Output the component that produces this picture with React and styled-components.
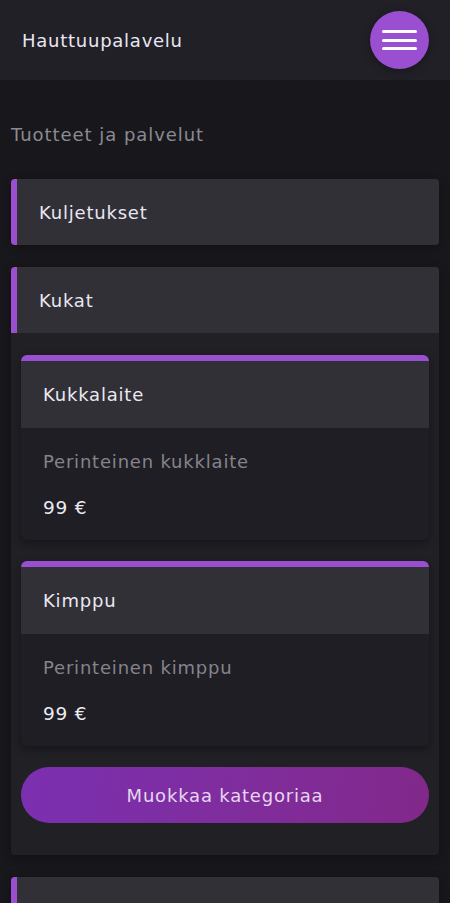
import React from "react";
import styled, { createGlobalStyle } from "styled-components";

const Global = createGlobalStyle`
  html, body { margin: 0; padding: 0; background: #18181c; }
  body { font-family: "DejaVu Sans", "Noto Sans", sans-serif; }
  * { box-sizing: border-box; }
`;

const Page = styled.div`
  min-height: 903px;
  background: #18181c;
`;

const Header = styled.header`
  height: 80px;
  background: #202026;
  display: flex;
  align-items: center;
  justify-content: space-between;
  padding: 0 21px 0 22px;
`;

const Brand = styled.div`
  color: #eae6f2;
  font-size: 18px;
  letter-spacing: 0.75px;
`;

const MenuButton = styled.button`
  width: 59px;
  height: 58px;
  border-radius: 50%;
  border: none;
  background: #9a4fd0;
  display: flex;
  flex-direction: column;
  align-items: center;
  justify-content: center;
  gap: 5.5px;
  box-shadow: 0 2px 8px rgba(0, 0, 0, 0.35);
  padding: 0;
`;

const Bar = styled.span`
  display: block;
  width: 35px;
  height: 3px;
  border-radius: 2px;
  background: #ffffff;
`;

const Main = styled.main`
  padding: 0 11px;
  display: flex;
  flex-direction: column;
  gap: 22px;
`;

const SectionTitle = styled.h2`
  margin: 0 0 -22px;
  padding-top: 43px;
  height: 99px;
  font-weight: 400;
  font-size: 18px;
  letter-spacing: 0.95px;
  color: #8b8a93;
  line-height: 24px;
`;

const Category = styled.section`
  border-radius: 4px;
  overflow: hidden;
  background: #202025;
  box-shadow: 0 2px 10px rgba(0, 0, 0, 0.3);
`;

const CategoryHeader = styled.div`
  height: 66px;
  background: #303036;
  border-left: 6px solid #9a4fd0;
  display: flex;
  align-items: center;
  padding-left: 22px;
  color: #e9e6f2;
  font-size: 18px;
  letter-spacing: 0.8px;
`;

const CategoryBody = styled.div`
  padding: 22px 10px 32px;
  display: flex;
  flex-direction: column;
  gap: 21px;
`;

const Product = styled.article`
  border-radius: 6px;
  overflow: hidden;
  border-top: 6px solid #9a4fd0;
  background: #1f1e24;
  box-shadow: 0 3px 10px rgba(0, 0, 0, 0.35);
`;

const ProductHeader = styled.div`
  height: 67px;
  background: #303036;
  display: flex;
  align-items: center;
  padding-left: 22px;
  color: #ebe8f2;
  font-size: 18px;
  letter-spacing: 0.8px;
`;

const ProductBody = styled.div`
  height: 112px;
  padding: 22px 22px 0;
  display: flex;
  flex-direction: column;
  gap: 22px;
`;

const Description = styled.div`
  color: #85838c;
  font-size: 18px;
  letter-spacing: 0.8px;
  line-height: 24px;
`;

const Price = styled.div`
  color: #eceaf2;
  font-size: 18.5px;
  letter-spacing: 0.8px;
  line-height: 24px;
`;

const EditButton = styled.button`
  height: 56px;
  border: none;
  border-radius: 28px;
  background: linear-gradient(100deg, #7b30b1 0%, #7f2d9e 50%, #82288a 100%);
  color: #e6d6f0;
  font-family: inherit;
  font-size: 18px;
  letter-spacing: 0.8px;
  cursor: pointer;
`;

const products = [
  { name: "Kukkalaite", desc: "Perinteinen kukklaite", price: "99 €" },
  { name: "Kimppu", desc: "Perinteinen kimppu", price: "99 €" },
];

export default function App() {
  return (
    <Page>
      <Global />
      <Header>
        <Brand>Hauttuupalavelu</Brand>
        <MenuButton aria-label="menu">
          <Bar />
          <Bar />
          <Bar />
        </MenuButton>
      </Header>
      <Main>
        <SectionTitle>Tuotteet ja palvelut</SectionTitle>
        <Category>
          <CategoryHeader>Kuljetukset</CategoryHeader>
        </Category>
        <Category>
          <CategoryHeader>Kukat</CategoryHeader>
          <CategoryBody>
            {products.map((p) => (
              <Product key={p.name}>
                <ProductHeader>{p.name}</ProductHeader>
                <ProductBody>
                  <Description>{p.desc}</Description>
                  <Price>{p.price}</Price>
                </ProductBody>
              </Product>
            ))}
            <EditButton>Muokkaa kategoriaa</EditButton>
          </CategoryBody>
        </Category>
        <Category>
          <CategoryHeader aria-label="Seuraava kategoria" />
        </Category>
      </Main>
    </Page>
  );
}
